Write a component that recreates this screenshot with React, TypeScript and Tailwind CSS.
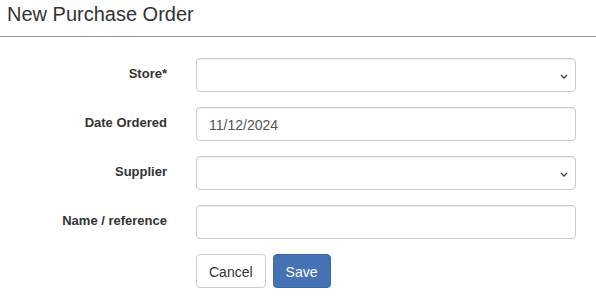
import React from "react";

const font = { fontFamily: '"Liberation Sans", Arial, sans-serif' };

function Chevron() {
  return (
    <svg width="8" height="5" viewBox="0 0 8 5" className="absolute right-[7px] top-[15px]">
      <path d="M1 1 L4 4 L7 1" fill="none" stroke="#444" strokeWidth="1.4" />
    </svg>
  );
}

function Control({ value, select }: { value?: string; select?: boolean }) {
  return (
    <div className="relative w-[380px] h-[34px] border border-[#ccc] rounded-[4px] bg-white shadow-[inset_0_1px_1px_rgba(0,0,0,0.075)] px-[12px] pt-[7px] text-[14px] leading-[20px] text-[#555]">
      {value}
      {select && <Chevron />}
    </div>
  );
}

function Row({ label, children }: { label: string; children: React.ReactNode }) {
  return (
    <div className="flex h-[34px]">
      <div className="w-[167px] text-right font-bold text-[13px] leading-[20px] pt-[6px] text-[#333]">{label}</div>
      <div className="ml-[29px]">{children}</div>
    </div>
  );
}

export default function App() {
  return (
    <div className="w-[596px] h-[307px] bg-white text-[#333]" style={font}>
      <div className="pt-[3px] pb-[11px] pl-[7px] text-[20px] leading-[22px] border-b border-[#999]">New Purchase Order</div>
      <div className="mt-[21px] flex flex-col gap-[15px]">
        <Row label="Store*"><Control select /></Row>
        <Row label="Date Ordered"><Control value="11/12/2024" /></Row>
        <Row label="Supplier"><Control select /></Row>
        <Row label="Name / reference"><Control /></Row>
        <div className="flex pl-[196px] gap-[7px]">
          <div className="h-[34px] px-[12px] pt-[7px] border border-[#ccc] rounded-[4px] bg-white text-[14px] leading-[20px] text-[#333]">Cancel</div>
          <div className="h-[34px] px-[12px] pt-[7px] border border-[#3d67a6] rounded-[4px] bg-[#4472b5] text-[14px] leading-[20px] text-white">Save</div>
        </div>
      </div>
    </div>
  );
}
